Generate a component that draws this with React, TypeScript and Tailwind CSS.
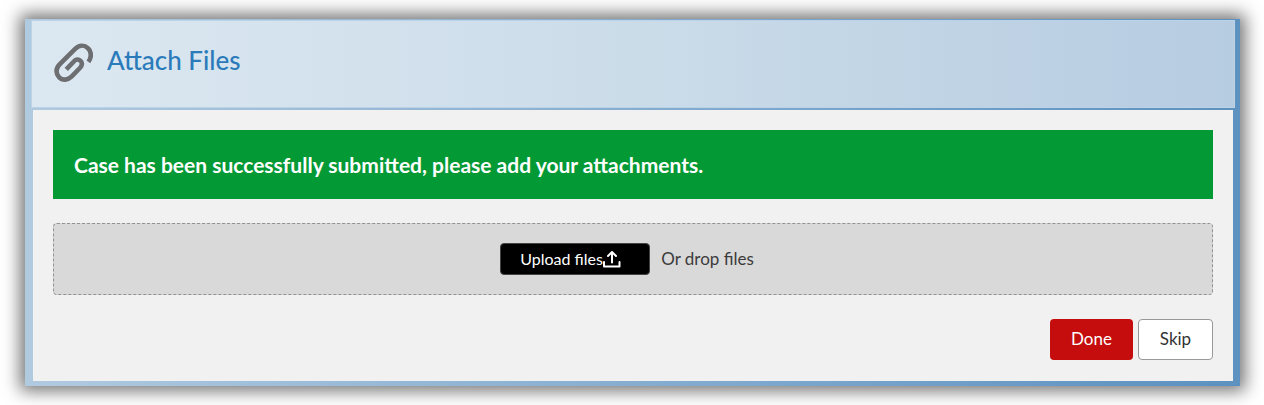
import { useRef } from "react";

function PaperclipIcon() {
  return (
    <svg
      viewBox="42 38 118 118"
      className="size-[39px] shrink-0"
      fill="none"
      stroke="#6d6e71"
      strokeWidth="14"
      aria-hidden="true"
    >
      <path d="M146 95C156 82 156 64 145 54C134 43 118 44 106 56L59 103C47 115 47 131 57 141C68 152 84 151 95 140L121 113C128 105 128 97 122 92C116 86 108 87 102 94L79 118" />
    </svg>
  );
}

function UploadIcon() {
  return (
    <svg
      viewBox="0 0 18 18"
      className="size-[18px] shrink-0"
      fill="none"
      stroke="currentColor"
      strokeWidth="2"
      strokeLinecap="round"
      strokeLinejoin="round"
      aria-hidden="true"
    >
      <path d="M1 12V16.5H16.5V12" />
      <path d="M9 12.5V3" />
      <path d="M5 6L9 2L13 6" />
    </svg>
  );
}

export default function App() {
  const fileInput = useRef<HTMLInputElement>(null);

  return (
    <div className="bg-white pt-[19px] pb-[19px] pl-[25px] pr-6 font-['Lato','Open_Sans',sans-serif]">
      <main className="bg-linear-to-r from-[#b0cae0] to-[#5c91c0] pt-px pr-[5px] pb-[5px] pl-[6px] shadow-[0_0_16px_5px_rgba(0,0,0,0.55)]">
        {/* Header */}
        <header className="flex h-[88px] items-center gap-3.5 border border-[#bcd2e6] bg-linear-to-r from-[#dce8f1] via-[#cbdce9] to-[#b6cce1] pb-1 pl-[22px]">
          <PaperclipIcon />
          <h1 className="pb-1 text-[26px] leading-8 font-medium text-[#2b7bbb]">Attach Files</h1>
        </header>

        {/* Body */}
        <div className="mt-0.5 mr-0.5 ml-0.5 bg-[#f1f1f1] px-5 pt-5 pb-[21px]">
          <p role="status" className="bg-[#039934] px-[21px] py-5 text-[21px] leading-[29px] font-bold text-white">
            Case has been successfully submitted, please add your attachments.
          </p>

          <div className="mt-6 flex h-[72px] items-center justify-center gap-[11px] rounded border border-dashed border-[#929292] bg-[#d9d9d9]">
            <input ref={fileInput} type="file" multiple className="hidden" aria-label="Upload files" />
            <button
              type="button"
              onClick={() => fileInput.current?.click()}
              className="flex h-8 w-[150px] items-center rounded border border-[#444444] bg-black pl-[19px] text-base text-white"
            >
              Upload files
              <UploadIcon />
            </button>
            <span className="pr-3 text-[17px] text-[#3c3c3c]">Or drop files</span>
          </div>

          <div className="mt-6 flex justify-end gap-[5px]">
            <button type="button" className="h-[41px] w-[83px] rounded bg-[#c50d0d] pb-0.5 text-[17px] text-white">
              Done
            </button>
            <button
              type="button"
              className="h-[41px] w-[75px] rounded border border-[#999999] bg-white pb-0.5 text-[17px] text-[#333333]"
            >
              Skip
            </button>
          </div>
        </div>
      </main>
    </div>
  );
}
